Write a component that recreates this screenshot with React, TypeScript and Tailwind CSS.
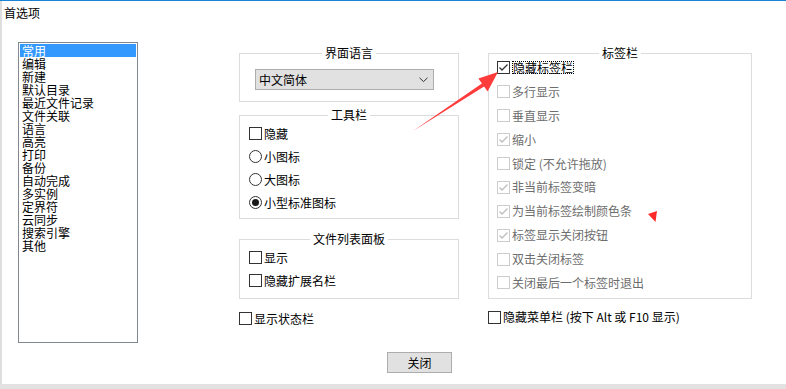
import React from "react";

const FONT = "font-['Noto_Sans_CJK_SC','Microsoft_YaHei',sans-serif]";

function Check({ checked = false, disabled = false }: { checked?: boolean; disabled?: boolean }) {
  return (
    <span
      className={`flex h-[13px] w-[13px] shrink-0 items-center justify-center border bg-white ${
        disabled ? "border-[#cccccc]" : "border-[#333333]"
      }`}
    >
      {checked && (
        <svg width="11" height="11" viewBox="0 0 11 11">
          <polyline
            points="1.5,5.5 4,8 9.5,2.5"
            fill="none"
            stroke={disabled ? "#bcbcbc" : "#333333"}
            strokeWidth="1.3"
          />
        </svg>
      )}
    </span>
  );
}

function Radio({ checked = false }: { checked?: boolean }) {
  return (
    <span className="flex h-[13px] w-[13px] shrink-0 items-center justify-center rounded-full border border-[#333333] bg-white">
      {checked && <span className="h-[7px] w-[7px] rounded-full bg-[#1a1a1a]" />}
    </span>
  );
}

function Group({ title, children, className = "" }: { title: string; children: React.ReactNode; className?: string }) {
  return (
    <fieldset className={`border border-[#dcdcdc] ${className}`}>
      <legend className="mx-auto px-[3px] text-[12px] leading-[14px] text-black">{title}</legend>
      {children}
    </fieldset>
  );
}

const listItems = [
  "常用",
  "编辑",
  "新建",
  "默认目录",
  "最近文件记录",
  "文件关联",
  "语言",
  "高亮",
  "打印",
  "备份",
  "自动完成",
  "多实例",
  "定界符",
  "云同步",
  "搜索引擎",
  "其他",
];

const tabItems: { label: string; checked: boolean; disabled: boolean }[] = [
  { label: "多行显示", checked: false, disabled: true },
  { label: "垂直显示", checked: false, disabled: true },
  { label: "缩小", checked: true, disabled: true },
  { label: "锁定 (不允许拖放)", checked: false, disabled: true },
  { label: "非当前标签变暗", checked: true, disabled: true },
  { label: "为当前标签绘制颜色条", checked: true, disabled: true },
  { label: "标签显示关闭按钮", checked: true, disabled: true },
  { label: "双击关闭标签", checked: false, disabled: true },
  { label: "关闭最后一个标签时退出", checked: false, disabled: true },
];

export default function App() {
  return (
    <div className={`relative flex h-[389px] w-[786px] flex-col overflow-hidden bg-[#e2e2e2] ${FONT} text-[12px] text-black`}>
      <div className="h-[1px] w-full shrink-0 bg-[#1883d7]" />
      <div className="flex h-[383px] shrink-0">
        <div className="w-[2px] shrink-0 bg-[#dedede]" />
        <div className="flex flex-1 flex-col bg-white">
          <div className="pl-[2px] pt-[4px] leading-[16px]">首选项</div>
          <div className="mt-[21px] flex items-start">
            {/* left list */}
            <div className="ml-[16px] h-[301px] w-[120px] border border-[#828790] p-[1px]">
              <div className="h-[13px] bg-[#3399ff] pl-[2px] leading-[13px] text-white">常用</div>
              {listItems.slice(1).map((t) => (
                <div key={t} className="h-[13px] pl-[2px] leading-[13px]">
                  {t}
                </div>
              ))}
            </div>

            {/* middle column */}
            <div className="ml-[101px] mt-[4px] flex w-[220px] flex-col">
              <Group title="界面语言" className="pb-[11px]">
                <div className="ml-[15px] mt-[9px] flex h-[21px] w-[179px] items-center justify-between border border-[#adadad] bg-[#e1e1e1] pl-[3px] pr-[5px]">
                  <span className="leading-[16px]">中文简体</span>
                  <svg width="9" height="6" viewBox="0 0 9 6">
                    <polyline points="0.5,0.8 4.5,4.6 8.5,0.8" fill="none" stroke="#333" strokeWidth="1" />
                  </svg>
                </div>
              </Group>
              <Group title="工具栏" className="mt-[6px] pb-[4px]">
                <div className="flex h-[23px] items-center gap-[2px] pl-[9px]">
                  <Check />
                  <span>隐藏</span>
                </div>
                <div className="flex h-[23px] items-center gap-[2px] pl-[9px]">
                  <Radio />
                  <span>小图标</span>
                </div>
                <div className="flex h-[23px] items-center gap-[2px] pl-[9px]">
                  <Radio />
                  <span>大图标</span>
                </div>
                <div className="flex h-[23px] items-center gap-[2px] pl-[9px]">
                  <Radio checked />
                  <span>小型标准图标</span>
                </div>
              </Group>
              <Group title="文件列表面板" className="mt-[13px] pb-[6px]">
                <div className="flex h-[23px] items-center gap-[2px] pl-[9px]">
                  <Check />
                  <span>显示</span>
                </div>
                <div className="flex h-[23px] items-center gap-[2px] pl-[9px]">
                  <Check />
                  <span>隐藏扩展名栏</span>
                </div>
              </Group>
              <div className="mt-[8px] flex h-[23px] items-center gap-[2px]">
                <Check />
                <span>显示状态栏</span>
              </div>
              <button className="ml-[148px] mt-[22px] flex h-[21px] w-[65px] items-center justify-center border border-[#adadad] bg-[#e1e1e1] leading-[16px]">
                关闭
              </button>
            </div>

            {/* right column */}
            <div className="ml-[29px] mt-[4px] flex w-[264px] flex-col">
              <Group title="标签栏" className="pb-[3px]">
                <div className="-mt-[4px]">
                  <div className="flex h-[23.9px] items-center gap-[2px] pl-[8px]">
                    <Check checked />
                    <span className="inline-block border border-dotted border-black leading-[11px]">隐藏标签栏</span>
                  </div>
                  {tabItems.map((it) => (
                    <div key={it.label} className="flex h-[23.9px] items-center gap-[2px] pl-[8px]">
                      <Check checked={it.checked} disabled={it.disabled} />
                      <span className="text-[#6d6d6d]">{it.label}</span>
                    </div>
                  ))}
                </div>
              </Group>
              <div className="mt-[7px] flex h-[23px] items-center gap-[2px]">
                <Check />
                <span>隐藏菜单栏 (按下 Alt 或 F10 显示)</span>
              </div>
            </div>
          </div>
        </div>
      </div>

      {/* annotation overlay */}
      <svg className="pointer-events-none absolute left-0 top-0" width="786" height="389" viewBox="0 0 786 389">
        <polygon
          points="413,131 481.9,83.4 478.4,78.4 498,72 487.6,91.6 484.1,86.6"
          fill="#ff3c3c"
        />
        <polygon points="648,214 657,211 655.5,222" fill="#ff2a2a" />
      </svg>
    </div>
  );
}
